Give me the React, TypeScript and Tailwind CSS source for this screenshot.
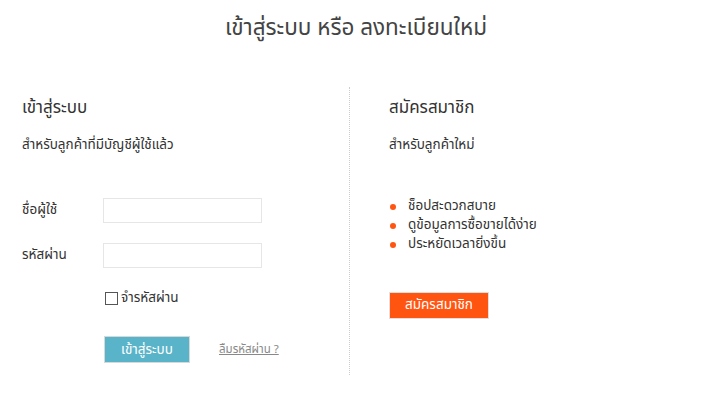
const font = { fontFamily: '"Noto Sans Thai", Tahoma, "Noto Sans", sans-serif' };

const benefits = ["ช็อปสะดวกสบาย", "ดูข้อมูลการซื้อขายได้ง่าย", "ประหยัดเวลายิ่งขึ้น"];

const App = () => {
  return (
    <div className="w-[712px] h-[398px] bg-white text-[#333]" style={font}>
      <h1 className="pt-[12px] text-center text-[22.5px] leading-[32px] text-[#444]">
        เข้าสู่ระบบ หรือ ลงทะเบียนใหม่
      </h1>

      <div className="mt-[43px] flex">
        {/* login */}
        <section className="w-[350px] h-[288px] pl-[22px] border-r border-dotted border-[#ccc]">
          <h2 className="mt-[9px] text-[17px] leading-[24px] text-[#333]">เข้าสู่ระบบ</h2>
          <p className="mt-[15px] text-[13.5px] leading-[20px]">สำหรับลูกค้าที่มีบัญชีผู้ใช้แล้ว</p>

          <div className="mt-[43px] flex items-center">
            <label className="w-[81px] text-[13.5px]">ชื่อผู้ใช้</label>
            <input className="w-[159px] h-[25px] border border-[#e6e6e6] outline-none" />
          </div>
          <div className="mt-[20px] flex items-center">
            <label className="w-[81px] text-[13.5px]">รหัสผ่าน</label>
            <input type="password" className="w-[159px] h-[25px] border border-[#e6e6e6] outline-none" />
          </div>

          <label className="mt-[20px] ml-[83px] flex items-center gap-[3px] text-[13.5px]">
            <span className="w-[13px] h-[13px] border border-[#555] bg-white" />
            จำรหัสผ่าน
          </label>

          <div className="mt-[28px] ml-[82px] flex items-center gap-[29px]">
            <button className="w-[86px] h-[27px] bg-[#5ab4c9] border border-[#d8d8d8] text-white text-[13.5px]">
              เข้าสู่ระบบ
            </button>
            <a href="#" className="text-[11.5px] text-[#888] underline">ลืมรหัสผ่าน ?</a>
          </div>
        </section>

        {/* register */}
        <section className="pl-[39px]">
          <h2 className="mt-[9px] text-[17px] leading-[24px] text-[#333]">สมัครสมาชิก</h2>
          <p className="mt-[15px] text-[13.5px] leading-[20px]">สำหรับลูกค้าใหม่</p>

          <ul className="mt-[42px] flex flex-col text-[13.5px] leading-[19px]">
            {benefits.map((b) => (
              <li key={b} className="flex items-center gap-[12px]">
                <span className="ml-[1px] w-[6px] h-[6px] rounded-full bg-[#ff5511]" />
                {b}
              </li>
            ))}
          </ul>

          <button className="mt-[38px] w-[100px] h-[27px] bg-[#ff5511] border border-[#e0e0e0] text-white text-[13.5px]">
            สมัครสมาชิก
          </button>
        </section>
      </div>
    </div>
  );
};

export default App;
